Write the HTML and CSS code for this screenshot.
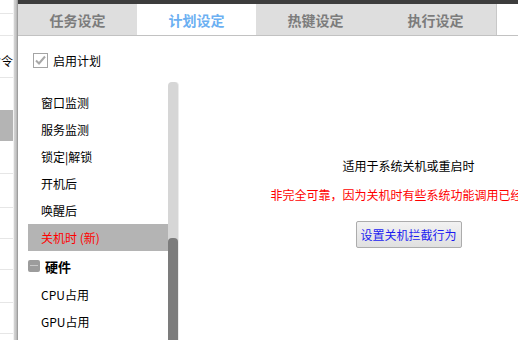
FILE: index.html
```html
<!DOCTYPE html>
<html lang="zh">
<head>
<meta charset="utf-8">
<link rel="stylesheet" href="styles.css">
</head>
<body>
<div class="strip">
  <div class="srow r1"></div>
  <div class="srow r2"></div>
  <div class="srow r3"><span>命令</span></div>
  <div class="srow r4"></div>
  <div class="srow r5"></div>
  <div class="srow r6"></div>
  <div class="srow r7"></div>
  <div class="srow r8"></div>
  <div class="srow r8"></div>
  <div class="srow r9"></div>
  <div class="srow r8"></div>
</div>
<div class="shadow"></div>
<div class="dialog">
  <div class="topbar"></div>
  <div class="tabs">
    <div class="tab">任务设定</div>
    <div class="tab active">计划设定</div>
    <div class="tab">热键设定</div>
    <div class="tab last">执行设定</div>
  </div>
  <div class="check-row">
    <span class="checkbox">
      <svg width="13" height="13" viewBox="0 0 13 13"><path d="M2 6.5 L5 9.5 L11 2.5" fill="none" stroke="#a8a8a8" stroke-width="2"/></svg>
    </span>
    <span class="check-label">启用计划</span>
  </div>
  <div class="main">
    <div class="list">
      <div class="item">窗口监测</div>
      <div class="item">服务监测</div>
      <div class="item">锁定|解锁</div>
      <div class="item">开机后</div>
      <div class="item">唤醒后</div>
      <div class="item selected">关机时 (新)</div>
      <div class="group"><span class="gicon"></span>硬件</div>
      <div class="item">CPU占用</div>
      <div class="item">GPU占用</div>
    </div>
    <div class="scrollbar"><div class="thumb"></div></div>
    <div class="pane">
      <div class="desc">适用于系统关机或重启时</div>
      <div class="warn">非完全可靠，因为关机时有些系统功能调用已经失效</div>
      <button class="btn">设置关机拦截行为</button>
    </div>
  </div>
</div>
</body>
</html>
```

FILE: styles.css
```css
html, body {
  margin: 0;
  padding: 0;
}
body {
  width: 518px;
  height: 340px;
  overflow: hidden;
  display: flex;
  background: #ffffff;
  font-family: "Noto Sans CJK SC", "Noto Sans", sans-serif;
  font-size: 12px;
  color: #000;
}
.strip {
  width: 13px;
  flex: none;
  display: flex;
  flex-direction: column;
  background: #fff;
  overflow: hidden;
}
.srow {
  flex: none;
  border-bottom: 1px solid #e6e6e6;
  box-sizing: border-box;
  display: flex;
  justify-content: flex-end;
  align-items: center;
  overflow: hidden;
  white-space: nowrap;
}
.r1 { height: 14px; }
.r2 { height: 22px; }
.r3 { height: 42px; font-size: 12px; line-height: 14px; align-items: flex-end; padding-bottom: 9px; }
.r4 { height: 32px; border-bottom: none; }
.r5 { height: 31px; background: #b4b4b4; border-bottom: none; }
.r6 { height: 33px; }
.r7 { height: 34px; }
.r8 { height: 31px; }
.r9 { height: 33px; }
.shadow {
  width: 5px;
  flex: none;
  background: linear-gradient(to right, #f2f2f2 0, #f2f2f2 1px, #d4d4d4 1px, #c6c6c6 3px, #b0b0b0 4px, #8c8c8c 5px);
}
.dialog {
  width: 620px;
  flex: none;
  display: flex;
  flex-direction: column;
  background: #fff;
}
.topbar {
  height: 4px;
  background: #3d3d3d;
}
.tabs {
  display: flex;
  height: 31px;
  border-bottom: 1px solid #c2c2c2;
  background: #ffffff;
}
.tab {
  width: 119px;
  flex: none;
  background: #dedede;
  color: #7c7c7c;
  font-weight: bold;
  font-size: 14px;
  display: flex;
  align-items: center;
  justify-content: center;
  line-height: 16px;
  padding-top: 1px;
  box-sizing: border-box;
}
.tab.active {
  background: #ffffff;
  color: #6cb0f2;
}
.tab.last {
  width: 122px;
  border-right: 1px solid #c8c8c8;
}
.check-row {
  display: flex;
  align-items: center;
  padding: 17px 0 14px 15px;
  height: 15px;
}
.checkbox {
  width: 13px;
  height: 13px;
  border: 1px solid #a4a4a4;
  background: #fff;
  display: flex;
  align-items: center;
  justify-content: center;
}
.checkbox svg { display: block; }
.check-label {
  margin-left: 5px;
  line-height: 15px;
  color: #000;
}
.main {
  display: flex;
  flex: 1;
}
.list {
  width: 140px;
  flex: none;
  padding: 7px 0 0 10px;
  display: flex;
  flex-direction: column;
}
.item {
  height: 27px;
  flex: none;
  display: flex;
  align-items: center;
  padding-left: 13px;
  line-height: 14px;
}
.item.selected {
  background: #b4b4b4;
  color: #ff0000;
}
.group {
  height: 30px;
  flex: none;
  display: flex;
  align-items: center;
  font-weight: bold;
  font-size: 13px;
  line-height: 15px;
}
.gicon {
  width: 12px;
  height: 12px;
  border-radius: 2px;
  background: #9c9c9c;
  margin-right: 5px;
  position: relative;
}
.gicon::after {
  content: "";
  position: absolute;
  left: 2px;
  right: 2px;
  top: 5px;
  height: 1px;
  background: #c8c8c8;
}
.scrollbar {
  width: 10px;
  flex: none;
  background: #d6d6d6;
  border-radius: 4px 4px 0 0;
  display: flex;
  flex-direction: column;
  justify-content: flex-end;
  border-right: 1px solid #ececec;
}
.thumb {
  height: 102px;
  background: #7c7c7c;
  border-radius: 4px 4px 0 0;
}
.pane {
  flex: 1;
  display: flex;
  flex-direction: column;
  align-items: center;
  padding-top: 75px;
}
.desc {
  line-height: 18px;
  white-space: nowrap;
}
.warn {
  margin-top: 11px;
  line-height: 18px;
  color: #ff0000;
  white-space: nowrap;
}
.btn {
  margin-top: 17px;
  width: 106px;
  height: 27px;
  font-family: "Noto Sans CJK SC", "Noto Sans", sans-serif;
  font-size: 12px;
  color: #1c1cf0;
  border: 1px solid #acacac;
  border-radius: 2px;
  background: linear-gradient(#f2f2f2, #e0e0e0);
  padding: 0;
  line-height: 14px;
}
```
